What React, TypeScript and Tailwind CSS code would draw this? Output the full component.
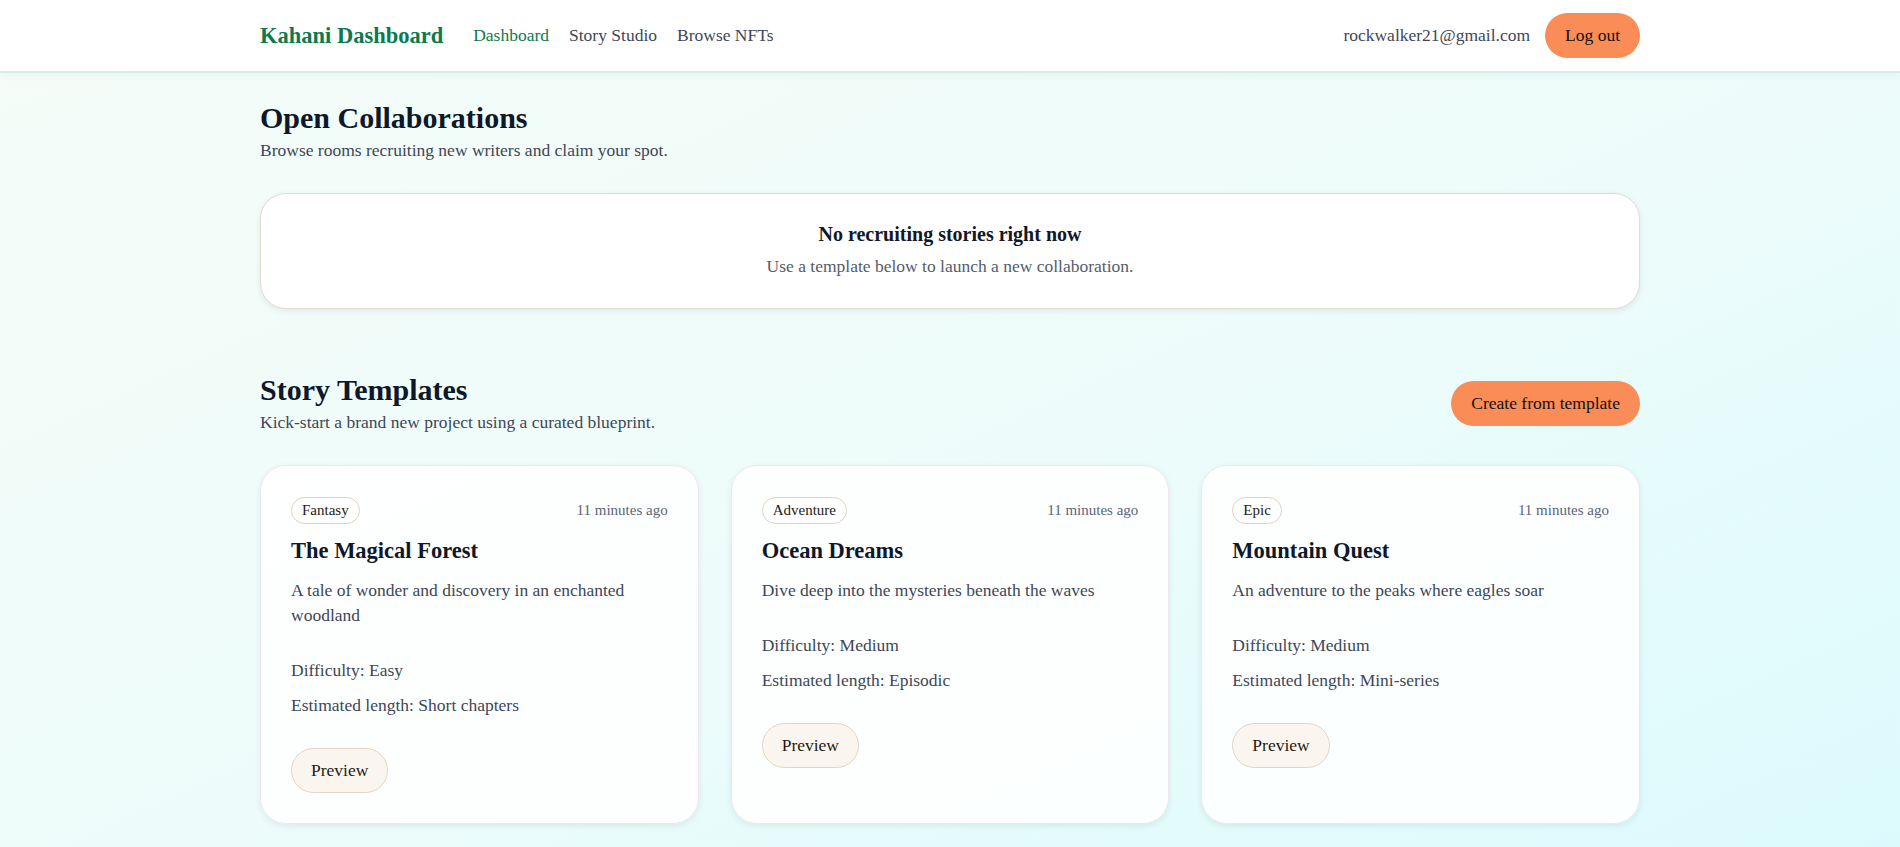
import React from "react";

type Template = {
  genre: string;
  title: string;
  description: string;
  difficulty: string;
  length: string;
};

const TEMPLATES: Template[] = [
  {
    genre: "Fantasy",
    title: "The Magical Forest",
    description: "A tale of wonder and discovery in an enchanted woodland",
    difficulty: "Easy",
    length: "Short chapters",
  },
  {
    genre: "Adventure",
    title: "Ocean Dreams",
    description: "Dive deep into the mysteries beneath the waves",
    difficulty: "Medium",
    length: "Episodic",
  },
  {
    genre: "Epic",
    title: "Mountain Quest",
    description: "An adventure to the peaks where eagles soar",
    difficulty: "Medium",
    length: "Mini-series",
  },
];

function TemplateCard({ t }: { t: Template }) {
  return (
    <div className="flex flex-col rounded-[26px] border border-[#ece8f0] bg-white/90 px-[30px] pt-[31px] pb-[30px] shadow-[0_2px_6px_rgba(15,23,42,0.08)]">
      <div className="flex items-center justify-between">
        <span className="rounded-full border border-[#ddd3c0] bg-white px-[10px] py-[3px] text-[15px] leading-[19px] text-[#1e1b16]">
          {t.genre}
        </span>
        <span className="text-[15px] text-[#5b6478]">11 minutes ago</span>
      </div>
      <h3 className="mt-[12px] text-[22.5px] font-bold leading-[30px] text-[#0f172a]">{t.title}</h3>
      <p className="mt-[12px] pr-[20px] text-[17.5px] leading-[25px] text-[#3f4658]">{t.description}</p>
      <div className="mt-[30px] flex flex-col gap-[10px] text-[17.5px] leading-[25px] text-[#3f4658]">
        <p>Difficulty: {t.difficulty}</p>
        <p>Estimated length: {t.length}</p>
      </div>
      <div className="mt-[30px]">
        <button className="h-[45px] rounded-full border border-[#e0d6c4] bg-[#faf6ef] px-[19px] text-[17.5px] text-[#1e1b16]">
          Preview
        </button>
      </div>
    </div>
  );
}

export default function App() {
  return (
    <div
      className="min-h-[847px] bg-gradient-to-br from-[#f5fcf8] via-[#eefcfa] to-[#dcfafd] text-[#0f172a]"
      style={{ fontFamily: '"Liberation Serif", "Times New Roman", serif' }}
    >
      <header className="h-[73px] border-b-2 border-[#d7ede7] bg-white shadow-[0_2px_8px_rgba(16,90,70,0.06)]">
        <div className="mx-auto flex h-full max-w-[1380px] items-center justify-between">
          <div className="flex items-center">
            <span className="text-[22.5px] font-bold text-[#0b7a4d]">Kahani Dashboard</span>
            <nav className="ml-[30px] flex items-center gap-[20px] text-[17.5px]">
              <a className="text-[#0b7a4d]">Dashboard</a>
              <a className="text-[#3f4658]">Story Studio</a>
              <a className="text-[#3f4658]">Browse NFTs</a>
            </nav>
          </div>
          <div className="flex items-center gap-[15px]">
            <span className="text-[17.5px] text-[#3f4658]">rockwalker21@gmail.com</span>
            <button className="h-[45px] rounded-full bg-[#fa8c58] px-5 text-[17.5px] text-[#111]">
              Log out
            </button>
          </div>
        </div>
      </header>

      <main className="mx-auto max-w-[1380px] pb-8">
        <section className="pt-[27px]">
          <h2 className="text-[30px] font-bold leading-[36px]">Open Collaborations</h2>
          <p className="mt-[1px] text-[17.5px] leading-[26px] text-[#3f4658]">Browse rooms recruiting new writers and claim your spot.</p>
          <div className="mt-[30px] flex h-[116px] flex-col items-center justify-center rounded-[26px] border border-[#e2dccf] bg-white pb-[3px] shadow-[0_2px_6px_rgba(15,23,42,0.08)]">
            <p className="text-[20px] font-bold leading-[26px] text-[#111827]">No recruiting stories right now</p>
            <p className="mt-[6px] text-[17.5px] leading-[26px] text-[#555c6b]">Use a template below to launch a new collaboration.</p>
          </div>
        </section>

        <section className="mt-[63px]">
          <div className="flex items-center justify-between">
            <div>
              <h2 className="text-[30px] font-bold leading-[36px]">Story Templates</h2>
              <p className="mt-[1px] text-[17.5px] leading-[26px] text-[#3f4658]">Kick-start a brand new project using a curated blueprint.</p>
            </div>
            <button className="h-[45px] rounded-full bg-[#fa8c58] px-5 text-[17.5px] text-[#111]">
              Create from template
            </button>
          </div>
          <div className="mt-[30px] grid grid-cols-3 gap-8">
            {TEMPLATES.map((t) => (
              <TemplateCard key={t.title} t={t} />
            ))}
          </div>
        </section>
      </main>
    </div>
  );
}
